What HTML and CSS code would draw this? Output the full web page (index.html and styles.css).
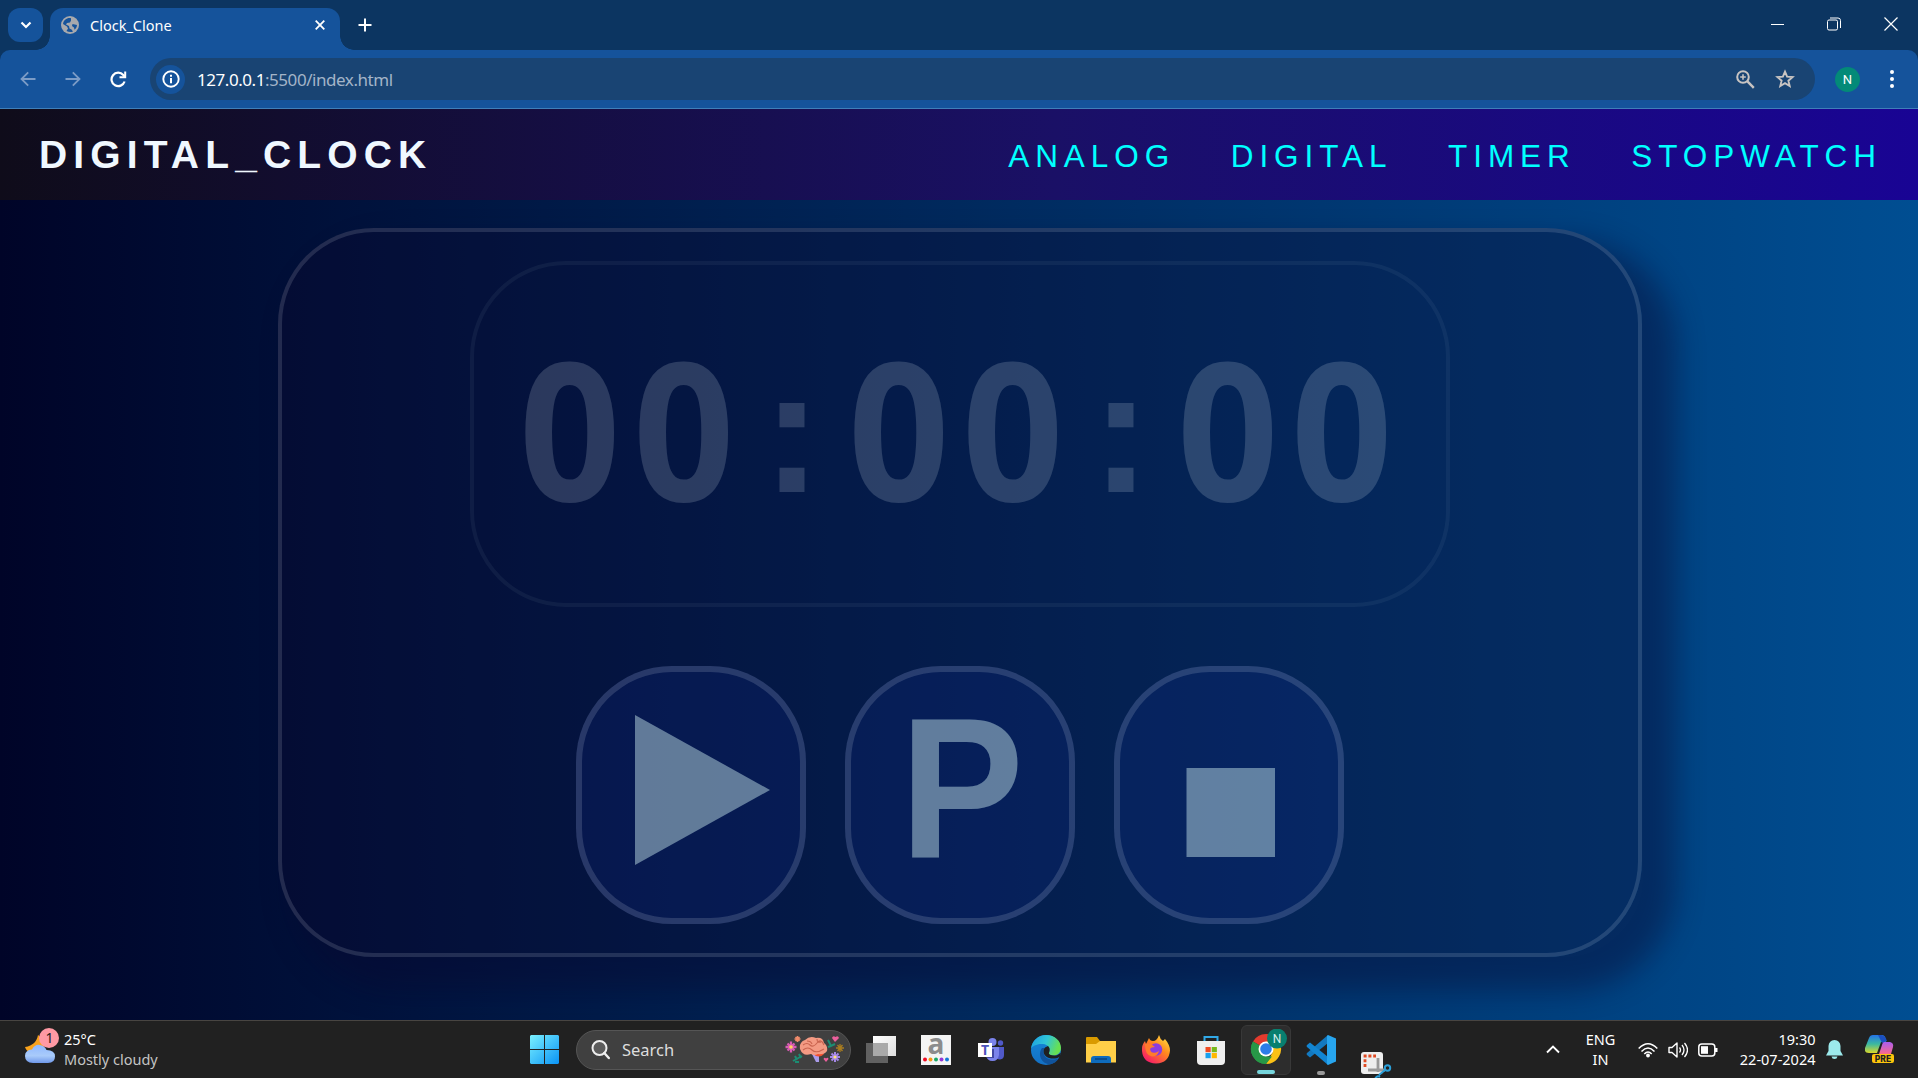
FILE: index.html
```html
<!DOCTYPE html>
<html lang="en">
<head>
<meta charset="utf-8">
<title>Clock_Clone</title>
<link rel="stylesheet" href="styles.css">
</head>
<body>
<div class="screen">
  <header class="tabstrip">
    <button class="tab-search"><svg width="12" height="8" viewBox="0 0 12 8"><path d="M1.5 1.5 6 6l4.500-4.500" fill="none" stroke="#fff" stroke-width="2.200"/></svg></button>
    <div class="tab">
      <svg class="globe" width="18" height="18" viewBox="0 0 18 18"><circle cx="9" cy="9" r="9" fill="#a7a9ad"/><path d="M10 2.200C6 1.500 2.500 4 2 8l4 2.500 1 2-1.500 2.500c2 1 4.500 1.500 6.500.500l-1.500-2-2-1-.500-2.500L5 8.500 6 7l3-.500 1-2zM11.500 8l4.500 1c-.200 2-1 3.500-2.500 4.800L13 11.500l-2-1.500z" fill="#15539b"/></svg>
      <span class="tab-title">Clock_Clone</span>
      <svg class="tab-close" width="10" height="10" viewBox="0 0 10 10"><path d="M.7.7l8.600 8.600M9.300.7.7 9.300" stroke="#fff" stroke-width="1.800"/></svg>
    </div>
    <svg class="new-tab" width="14" height="14" viewBox="0 0 14 14"><path d="M7 .5v13M.5 7h13" stroke="#fff" stroke-width="2"/></svg>
    <div class="window-buttons">
      <svg width="13" height="14" viewBox="0 0 13 14"><path d="M0 7.500h13" stroke="#fff" stroke-width="1"/></svg>
      <svg width="14" height="14" viewBox="0 0 14 14"><rect x=".5" y="3" width="10" height="10" rx="1.500" fill="none" stroke="#fff"/><path d="M3 1h8q2.500 0 2.500 2.500V11" fill="none" stroke="#fff"/></svg>
      <svg width="14" height="14" viewBox="0 0 14 14"><path d="M.5.5l13 13M13.500.5l-13 13" stroke="#fff" stroke-width="1.200"/></svg>
    </div>
  </header>

  <div class="toolbar">
    <svg class="back" width="16" height="16" viewBox="0 0 16 16"><path d="M15.500 8H2M8.200 1.300 1.500 8l6.700 6.700" fill="none" stroke="#7c9cc6" stroke-width="1.800"/></svg>
    <svg class="forward" width="16" height="16" viewBox="0 0 16 16"><path d="M.5 8H14M7.800 1.300 14.500 8l-6.700 6.700" fill="none" stroke="#7c9cc6" stroke-width="1.800"/></svg>
    <svg class="reload" width="17" height="17" viewBox="0 0 17 17"><path d="M14.600 10.500A6.700 6.700 0 1 1 13.300 4L15 6" fill="none" stroke="#fff" stroke-width="2.200"/><path d="M16.200.5v6.800H9.500V5.200h4.700V.5z" fill="#fff"/></svg>
    <div class="omnibox">
      <span class="site-info"><svg width="18" height="18" viewBox="0 0 18 18"><circle cx="9" cy="9" r="7.700" fill="none" stroke="#fff" stroke-width="1.900"/><path d="M9 8v5.200M9 4.700v2" stroke="#fff" stroke-width="2"/></svg></span>
      <span class="url"><b>127.0.0.1</b>:5500/index.html</span>
      <svg class="zoom-icon" width="19" height="19" viewBox="0 0 19 19"><circle cx="7" cy="7" r="5.800" fill="none" stroke="#c8c4c2" stroke-width="2"/><path d="M11.200 11.200l6.600 6.600" stroke="#c8c4c2" stroke-width="2.400"/><path d="M7 4.200v5.600M4.200 7h5.600" stroke="#c8c4c2" stroke-width="1.600"/></svg>
      <svg width="20" height="20" viewBox="0 0 20 20"><path d="M10 2.600l2.100 5 5.500.5-4.200 3.600 1.300 5.300L10 14.200 5.300 17l1.300-5.300L2.400 8.100l5.500-.5z" fill="none" stroke="#c8c4c2" stroke-width="1.900"/></svg>
    </div>
    <span class="avatar">N</span>
    <svg class="menu" width="4" height="18" viewBox="0 0 4 18"><circle cx="2" cy="2" r="2" fill="#fff"/><circle cx="2" cy="9" r="2" fill="#fff"/><circle cx="2" cy="16" r="2" fill="#fff"/></svg>
  </div>

  <nav class="nav">
    <h1 class="logo">DIGITAL_CLOCK</h1>
    <div class="links"><a>ANALOG</a><a>DIGITAL</a><a>TIMER</a><a>STOPWATCH</a></div>
  </nav>

  <main class="page">
    <section class="watch">
      <div class="display">
        <span class="digit">0</span><span class="digit">0</span><span class="colon">:</span><span class="digit">0</span><span class="digit">0</span><span class="colon">:</span><span class="digit">0</span><span class="digit">0</span>
      </div>
      <div class="controls">
        <button class="control"><svg width="218" height="246" viewBox="0 0 218 246"><path class="glyph" d="M53 43v150l135-75z"/></svg></button>
        <button class="control"><span class="pause">P</span></button>
        <button class="control"><svg width="218" height="246" viewBox="0 0 218 246"><path class="glyph" d="M66.500 96H155v89H66.500z"/></svg></button>
      </div>
    </section>
  </main>

  <footer class="taskbar">
    <div class="weather">
      <svg width="35" height="38" viewBox="0 0 35 38">
        <defs><linearGradient id="cloud" x1="0" y1="0" x2="0" y2="1"><stop offset="0" stop-color="#8fb8ff"/><stop offset=".6" stop-color="#a9cbfa"/><stop offset="1" stop-color="#6f98ea"/></linearGradient></defs>
        <path d="M13 7c-1 6-5 11-13 12 2 6 8 8 14 5 5-3 7-9 4-13z" fill="#f8a21c"/>
        <path d="M8 35q-8-.5-8-7 0-6 7-6.500Q10 16 15 17q5 1 6.500 5 8.500 0 8.500 6.500T23 35z" fill="url(#cloud)"/>
        <circle cx="24" cy="10" r="10" fill="#ff99a4"/>
        <text x="24.500" y="15" text-anchor="middle" font-family="Noto Sans, sans-serif" font-size="14" fill="#222">1</text>
      </svg>
      <p class="weather-text">25°C<br><span>Mostly cloudy</span></p>
    </div>

    <svg class="start" width="29" height="29" viewBox="0 0 29 29"><defs><linearGradient id="win" x1="0" y1="0" x2="1" y2="1"><stop offset="0" stop-color="#7af1ff"/><stop offset="1" stop-color="#0a93f5"/></linearGradient></defs><path d="M1 0h13v14H0V1zM15 0h13l1 1v13H15zM0 15h14v14H1l-1-1zM15 15h14v13l-1 1H15z" fill="url(#win)"/></svg>

    <div class="search">
      <svg width="19" height="20" viewBox="0 0 19 20"><circle cx="8.500" cy="8" r="7" fill="#5c5c5c" stroke="#eee" stroke-width="2"/><path d="M13.300 13l4.500 5" stroke="#eee" stroke-width="2.400" stroke-linecap="round"/></svg>
      <span>Search</span>
      <svg class="brain" width="60" height="28" viewBox="0 0 60 28">
        <path d="M27 18l4 8h3v-9z" fill="#a99bea"/><path d="M28 18q6 5 11 0l-1-4z" fill="#f04e2e"/>
        <path d="M15 13q-1-7 5-9 5-5 11-2 7-1 8 5 4 3 3 8-3 4-9 3-4 2-7 0-8 3-11-5z" fill="#f39a83"/>
        <path d="M18 9q4-3 7 0t7-2 7 2M18 14q5-4 9 0t12-1M22 5q4 0 5 3M32 3q0 4 4 3" fill="none" stroke="#c9644f" stroke-width="1.100"/>
        <g fill="none" stroke="#d95bb5" stroke-width="2.300"><path d="M6 5.500v11M.5 11h11M2.500 7.500l7 7M9.500 7.500l-7 7"/></g><circle cx="6" cy="11" r="1.800" fill="#ffd45c"/>
        <g fill="none" stroke="#a587e8" stroke-width="2"><path d="M50 16v10M45 21h10M46.500 17.500l7 7M53.500 17.500l-7 7"/></g><circle cx="50" cy="21" r="1.600" fill="#ffe37a"/>
        <g fill="none" stroke="#ef8b6b" stroke-width="1.500"><path d="M12.500 0v6M9.500 3h6M10.500 1l4 4M14.500 1l-4 4"/></g>
        <g fill="none" stroke="#a87c20" stroke-width="1.300"><path d="M55 8v8M51 12h8M52.500 9l5 6M57.500 9l-5 6"/></g>
        <path d="M50 6l-3-4q1-3 3.500-1Q53-1 54 2zM41 26l-2.500-3q1-2 2.500-.5 2-1.500 2.500.5z" fill="#ec5f9d"/>
        <path d="M8 25l9-5M10 20l2 4M14 18l2 4M10 26l4 0M43 4l3 6 4-2M46 10l-3 1" stroke="#1c8d73" stroke-width="2" fill="none"/>
      </svg>
    </div>

    <div class="apps">
      <span class="app"><svg width="30" height="30" viewBox="0 0 30 30"><defs><linearGradient id="tv" x1="0" y1="0" x2="1" y2="1"><stop offset="0" stop-color="#fff"/><stop offset="1" stop-color="#ddd"/></linearGradient></defs><path d="M7 1h23v20H7z" fill="url(#tv)"/><path d="M0 8h22v20H0z" fill="#777" fill-opacity=".75"/><path d="M7 8h15v13H7z" fill="#a9a9a9"/></svg></span>
      <span class="app"><svg width="30" height="30" viewBox="0 0 30 30"><path d="M0 0h30v30H0z" fill="#f4f4f4"/><text x="15" y="18.500" text-anchor="middle" font-family="Open Sans, sans-serif" font-weight="700" font-size="28" fill="#8c8c8c">a</text><circle cx="4" cy="24.500" r="2" fill="#f00b22"/><circle cx="9.500" cy="24.500" r="2" fill="#f59a18"/><circle cx="15" cy="24.500" r="2" fill="#19a866"/><circle cx="20.500" cy="24.500" r="2" fill="#9438d9"/><circle cx="26" cy="24.500" r="2" fill="#1479d6"/></svg></span>
      <span class="app"><svg width="30" height="30" viewBox="0 0 30 30"><circle cx="24.500" cy="8" r="2.700" fill="#5059c9"/><path d="M20 12h8v8q0 4-4 4.500-4 0-4-4z" fill="#5059c9"/><circle cx="16.500" cy="7" r="4" fill="#7b83eb"/><path d="M10 12h13v8q-1 6-6.500 6T10 20z" fill="#7b83eb"/><path d="M2 8h14v14H2z" fill="#fff"/><path d="M16 14h2v9h-7v-1h5z" fill="#4147a3"/><text x="9" y="20" text-anchor="middle" font-family="Open Sans, sans-serif" font-weight="700" font-size="14" fill="#4b53bc">T</text></svg></span>
      <span class="app"><svg width="30" height="30" viewBox="0 0 30 30"><defs><linearGradient id="e1" x1="0" y1="0" x2="1" y2=".3"><stop offset="0" stop-color="#1b9de2"/><stop offset=".55" stop-color="#30c5d7"/><stop offset="1" stop-color="#67e052"/></linearGradient><linearGradient id="e2" x1="0" y1="0" x2="0" y2="1"><stop offset="0" stop-color="#1487d8"/><stop offset="1" stop-color="#1470c4"/></linearGradient></defs><circle cx="15" cy="15" r="15" fill="url(#e2)"/><path d="M0 14C1 5 8 0 15 0c9 0 15 6 15 13 0 5-4 7.500-8 7.500-4 0-5-1.500-4-3 2-4-1-8-6-8.500C6 8.500 1 11 0 14z" fill="url(#e1)"/><path d="M11 13c-5 7 0 16 8 16.400 4-.7 7-3 9-6.400-7 3.500-15 1-15.500-5.500-.1-2 .5-3.500 1.500-4.500z" fill="#10539c"/><path d="M14 12.500c-3 4-1 9 4 10.500 4 1.200 8 .6 10.800-1.300l1.200-4-4 2.500q-4 .8-7-.5-2-1.200-.7-2.700 1.200-4-1.300-6z" fill="#202020"/></svg></span>
      <span class="app"><svg width="30" height="30" viewBox="0 0 30 30"><path d="M0 3q0-1 1-1h10l3 4v6H0z" fill="#d99a00"/><path d="M0 9h10l4-3h16v21.500H0z" fill="#ffcf48"/><path d="M5 28v-4q0-3 3-3h14q3 0 3 3v4z" fill="#0f6cbd"/><path d="M9 24h12" stroke="#0a4580" stroke-width="1.500"/></svg></span>
      <span class="app"><svg width="30" height="30" viewBox="0 0 30 30"><defs><linearGradient id="ff" x1="1" y1="0" x2=".2" y2="1"><stop offset="0" stop-color="#fff04a"/><stop offset=".45" stop-color="#ff8a1d"/><stop offset="1" stop-color="#f5156c"/></linearGradient></defs><path d="M18 0q1 4 4 6l2-2q5 6 5 11.500Q28 28 15 28.500 2 28 1 16q-.5-6 3-10l1 3 3-6q1 3 4 3 4 0 6-6z" fill="url(#ff)"/><circle cx="15" cy="14.500" r="6.200" fill="#8b3ce0"/><path d="M4 9q5-2 10 3-4 0-5 2 1 5 6 3.500 2-.5 3-2-1 6-7 6-7-1-7-12z" fill="#ff7b2b"/></svg></span>
      <span class="app"><svg width="30" height="30" viewBox="0 0 30 30"><path d="M8.500 7V2h13v5" fill="none" stroke="#31a9e8" stroke-width="2"/><path d="M1 6h28v20q0 4-4 4H5q-4 0-4-4z" fill="#efefef"/><path d="M9.500 12h5.200v5.200H9.500z" fill="#f04a22"/><path d="M15.700 12h5.200v5.200h-5.200z" fill="#76b81c"/><path d="M9.500 18h5.200v5.200H9.500z" fill="#18a0ee"/><path d="M15.700 18h5.200v5.200h-5.200z" fill="#ffb800"/></svg></span>
      <span class="app active"><svg width="40" height="38" viewBox="0 0 40 38"><path d="M19 20 6 12.500A15 15 0 0 1 32 12.500z" fill="#e33b2e"/><path d="M19 20v15A15 15 0 0 1 6 12.500z" fill="#279847"/><path d="M19 12.500h13A15 15 0 0 1 19 35l6.500-11.200z" fill="#fbc116"/><path d="M6 12.500 12.500 24 19 27.500h6L19 35A15 15 0 0 1 6 12.500z" fill="#279847"/><circle cx="19" cy="20" r="7.500" fill="#fff"/><circle cx="19" cy="20" r="5.800" fill="#2d7de9"/><circle cx="30" cy="9.500" r="10" fill="#087f6f"/><text x="30" y="14" text-anchor="middle" font-family="Roboto, sans-serif" font-size="12" fill="#d7efec">N</text></svg></span>
      <span class="app running"><svg width="30" height="30" viewBox="0 0 30 30"><path d="M22 0v8L4 22.500 1 20q-1-1 0-2z" fill="#1379c0"/><path d="M1 10l3-2.500L22 22v8L1 12q-1-1 0-2z" fill="#1285d2"/><path d="M22 0l8 3.500v23L22 30l-1-1V1z" fill="#27a5ee"/></svg></span>
      <span class="app snip"><svg width="31" height="27" viewBox="0 0 31 27"><rect width="22" height="22" rx="3" fill="#eee"/><path d="M4 15V4h11" fill="none" stroke="#e04a22" stroke-width="2.800" stroke-dasharray="3 1.800"/><path d="M7 18h17M17 6v14" stroke="#9a9a9a" stroke-width="2.800"/><circle cx="26.500" cy="16" r="2.700" fill="none" stroke="#2b9fd8" stroke-width="2"/><path d="M24 18l-6 5M14 27q2-4 5-2" fill="none" stroke="#2b9fd8" stroke-width="2"/></svg></span>
    </div>

    <div class="tray">
      <svg class="caret" width="14" height="9" viewBox="0 0 14 9"><path d="M1 7.500l6-6 6 6" fill="none" stroke="#fff" stroke-width="1.900"/></svg>
      <p class="lang">ENG<br>IN</p>
      <svg class="wifi" width="20" height="16" viewBox="0 0 20 16"><g fill="none" stroke="#fff" stroke-width="1.500"><path d="M.7 6.500q9.300-9.500 18.600 0M3.500 9.500q6.500-6.800 13 0M6.300 12q3.700-4 7.400 0"/></g><circle cx="10" cy="13.500" r="1.900" fill="#fff"/></svg>
      <svg width="20" height="18" viewBox="0 0 20 18"><path d="M1 6.500h3L9 2v14l-5-4.500H1z" fill="none" stroke="#fff" stroke-width="1.400" stroke-linejoin="round"/><path d="M11.500 6.500q2 2.500 0 5M14 4q4 5 0 10M16.500 2q6 7 0 14" fill="none" stroke="#fff" stroke-width="1.300"/></svg>
      <svg width="20" height="14" viewBox="0 0 20 14"><rect x=".8" y="1" width="16" height="12" rx="3" fill="none" stroke="#fff" stroke-width="1.500"/><rect x="3" y="3.200" width="7" height="7.600" fill="#fff"/><path d="M17 5h2.500v4H17z" fill="#fff"/></svg>
      <p class="clock">19:30<br>22-07-2024</p>
      <svg class="bell" width="17" height="19" viewBox="0 0 17 19"><path d="M8.500 0Q14 .3 14.500 6v5l2.500 4.500H0L2.500 11V6Q3 .3 8.500 0zM5.500 16.500h6q-.5 2.500-3 2.500t-3-2.500z" fill="#9ceaec"/></svg>
      <svg class="copilot" width="30" height="29" viewBox="0 0 30 29"><defs><linearGradient id="c1" x1="0" y1="0" x2="0" y2="1"><stop offset="0" stop-color="#2473e8"/><stop offset=".5" stop-color="#3bb9a0"/><stop offset="1" stop-color="#d9d82b"/></linearGradient><linearGradient id="c2" x1="0" y1="0" x2="0" y2="1"><stop offset="0" stop-color="#a95df0"/><stop offset="1" stop-color="#fb6a8a"/></linearGradient></defs><path d="M8 0h9q4 0 4 7h-5l-4 11H4q-5 0-4-5L4 3q1-3 4-3z" fill="url(#c1)"/><path d="M16 0q4 0 6 6l-5 2-4-8z" fill="#1b4fc0"/><path d="M19 7h6q4 1 3 5l-2 7H14l3-9q.7-3 2-3z" fill="url(#c2)"/><rect x="7" y="19" width="22" height="9" rx="2" fill="#fdc50b"/><text x="18" y="26.700" text-anchor="middle" font-family="Inter, sans-serif" font-weight="800" font-size="8.500" fill="#222">PRE</text></svg>
    </div>
  </footer>
</div>
</body>
</html>
```
FILE: styles.css
```css
* { box-sizing: border-box; }
body { margin: 0; overflow: hidden; }
p, h1 { margin: 0; }
svg { display: block; flex: none; }
button { border: 0; padding: 0; background: none; }

.screen {
  width: 1918px;
  height: 1078px;
  display: flex;
  flex-direction: column;
  font-family: "Noto Sans", sans-serif;
  color: #fff;
  background: #0c3561;
}

/* Browser chrome */
.tabstrip { height: 50px; display: flex; padding: 8px 7px 0 8px; }
.tab-search {
  width: 35px; height: 34px; border-radius: 12px; background: #15539b;
  display: flex; align-items: center; justify-content: center;
}
.tab {
  position: relative;
  width: 290px; margin-left: 7px; padding: 0 15px 8px 11px;
  display: flex; align-items: center;
  border-radius: 13px 13px 0 0; background: #15539b;
}
.tab::before, .tab::after {
  content: ""; position: absolute; bottom: 0; width: 14px; height: 14px;
}
.tab::before { left: -14px; background: radial-gradient(circle at 0 0, transparent 13.500px, #15539b 14px); }
.tab::after { right: -14px; background: radial-gradient(circle at 100% 0, transparent 13.500px, #15539b 14px); }
.tab-title { margin-left: 11px; font-size: 14.500px; flex: 1; }
.new-tab { margin: 10px 0 0 18px; }
.window-buttons { margin: 9px 13px 0 auto; display: flex; gap: 43px; }

.toolbar {
  height: 59px; display: flex; align-items: center;
  padding: 0 24px 0 20px;
  border-bottom: 1px solid #3f7fb9;
  border-radius: 10px 10px 0 0;
  background: #15539b;
}
.forward { margin-left: 29px; }
.reload { margin-left: 29px; }
.omnibox {
  width: 1665px; height: 42px; margin-left: 23px; padding: 0 20px 0 6px;
  display: flex; align-items: center; border-radius: 21px; background: #194473;
}
.site-info {
  width: 29px; height: 29px; border-radius: 50%; background: #15539b;
  display: flex; align-items: center; justify-content: center;
}
.url { flex: 1; margin-left: 12px; font-size: 17px; letter-spacing: -.45px; color: #a3b4c8; }
.url b { font-weight: 400; color: #fff; }
.zoom-icon { margin-right: 20px; }
.avatar {
  width: 25px; height: 25px; margin-left: 20px; border-radius: 50%;
  background: #038a78; font: 13px/25px Roboto, sans-serif; text-align: center;
}
.menu { margin-left: auto; }

/* Site navigation */
.nav {
  height: 91px; padding: 0 36px 0 39px;
  display: flex; align-items: center; justify-content: space-between;
  font-family: "Liberation Sans", sans-serif;
  background: linear-gradient(to right, #0f0c1a, #1a1066 55%, #190494);
}
.logo { font-size: 39px; letter-spacing: 6.150px; color: #f0f8ff; }
.links { display: flex; gap: 55.500px; font-size: 31.500px; letter-spacing: 5.950px; color: #0ff; padding-top: 4px; }

/* Stopwatch */
.page {
  height: 820px; padding-top: 28px;
  background: linear-gradient(to right, #000428, #004e92);
}
.watch {
  width: 1364px; height: 729px; margin-left: 278px; padding-top: 29px;
  display: flex; flex-direction: column; align-items: center;
  border: 4px solid rgba(240, 248, 255, .135); border-radius: 96px;
  background: rgba(10, 8, 48, .36);
  box-shadow: 23px 23px 28px 11px rgba(10, 8, 48, .4);
}
.display {
  width: 980px; height: 346px; padding: 82px 0 0 39px;
  display: flex;
  border: 4px solid rgba(240, 248, 255, .05); border-radius: 96px;
  color: rgba(240, 248, 255, .17);
}
.digit, .colon { text-align: center; line-height: 160px; font-weight: 700; }
.digit { width: 113.500px; font-family: "Open Sans", sans-serif; font-size: 193px; transform: scaleX(.92); }
.colon { width: 102px; padding-left: 2px; font-family: "Liberation Sans", sans-serif; font-size: 177px; margin-top: 4px; }
.controls { display: flex; gap: 39px; margin-top: 59px; }
.control {
  width: 230px; height: 258px;
  border: 6px solid rgba(240, 248, 255, .15); border-radius: 96px;
  background: rgba(18, 42, 150, .18);
}
.glyph { fill: rgba(205, 238, 240, .46); }
.pause {
  display: block; height: 246px; padding-left: 4px; transform: scaleX(.93);
  font: 700 200px/234px "Liberation Sans", sans-serif; color: rgba(205, 238, 240, .46);
}

/* Taskbar */
.taskbar {
  height: 58px; border-top: 1px solid #484542; background: #212121;
  display: flex; align-items: center;
}
.weather { width: 505px; padding-left: 25px; display: flex; gap: 4px; align-items: center; }
.weather svg { margin-top: -6px; }
.weather-text, .lang, .clock { font-size: 14.500px; line-height: 20px; margin-top: -2px; }
.weather-text span { color: #c4c4c4; }
.start { margin-left: 25px; }
.search {
  width: 275px; height: 40px; margin-left: 17px; padding: 0 5px 0 14px;
  display: flex; align-items: center;
  border-radius: 20px; border: 1px solid #555; background: #404040;
  font-size: 16.500px; color: #ddd;
}
.search span { margin-left: 12px; }
.brain { margin-left: auto; }
.apps { display: flex; margin-left: 2.500px; height: 50px; }
.app { position: relative; width: 55px; display: flex; align-items: center; justify-content: center; }
.active { width: 50px; margin: 0 2.500px; border: 1px solid #383838; border-radius: 6px; background: #2d2d2d; }
.active svg { margin: -3px 0 0 1px; }
.active::after, .running::after {
  content: ""; position: absolute; bottom: 0; height: 4px; border-radius: 2px;
}
.active::after { width: 18px; background: #76d5dc; }
.running::after { width: 8px; background: #9a9a9a; }
.snip { padding-top: 31px; }
.tray { flex: 1; display: flex; align-items: center; padding-left: 142px; }
.lang { width: 40px; margin-left: 21px; text-align: center; }
.wifi { margin: 0 10px 0 17px; }
.wifi + svg { margin-right: 10px; }
.clock { width: 98px; text-align: right; }
.bell { margin-left: 10px; }
.copilot { margin-left: 22px; }
```
